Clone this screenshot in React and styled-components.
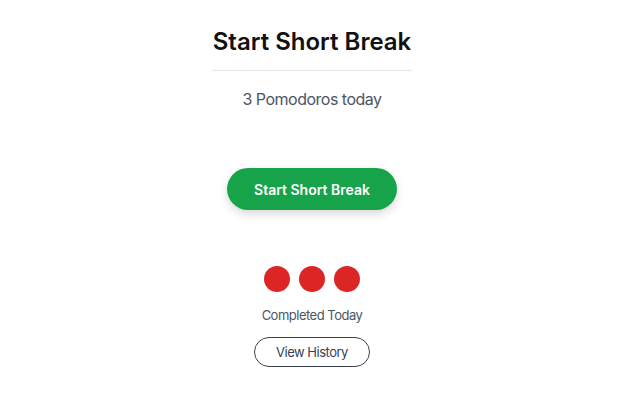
import React from "react";
import styled, { createGlobalStyle } from "styled-components";

const GlobalStyle = createGlobalStyle`
  body {
    margin: 0;
    background: #ffffff;
    font-family: Inter, "Liberation Sans", sans-serif;
  }
`;

const Page = styled.div`
  display: flex;
  flex-direction: column;
  align-items: center;
  padding: 26px 16px 0 0;
`;

const Title = styled.h1`
  margin: 0;
  font-size: 24px;
  line-height: 32px;
  font-weight: 600;
  color: #111111;
  padding-bottom: 12px;
  width: 200px;
  text-align: center;
  border-bottom: 1px solid #e5e7eb;
`;

const Count = styled.p`
  margin: 16px 0 0;
  font-size: 16px;
  line-height: 24px;
  letter-spacing: -0.5px;
  color: #4b5563;
`;

const StartButton = styled.button`
  margin-top: 57px;
  width: 170px;
  height: 42px;
  border: none;
  border-radius: 9999px;
  background: #16a34a;
  color: #ffffff;
  font-family: inherit;
  font-size: 14px;
  font-weight: 600;
  box-shadow: 0 4px 10px rgba(0, 0, 0, 0.15);
  cursor: pointer;
`;

const Dots = styled.div`
  display: flex;
  gap: 9px;
  margin-top: 56px;
`;

const Dot = styled.span`
  width: 26px;
  height: 26px;
  border-radius: 50%;
  background: #dc2626;
`;

const Label = styled.p`
  margin: 13px 0 0;
  font-size: 13px;
  line-height: 20px;
  letter-spacing: -0.5px;
  color: #4b5563;
`;

const HistoryButton = styled.button`
  margin-top: 12px;
  width: 116px;
  height: 30px;
  border: 1px solid #374151;
  border-radius: 9999px;
  background: #ffffff;
  color: #374151;
  font-family: inherit;
  font-size: 13px;
  letter-spacing: -0.5px;
  cursor: pointer;
`;

export default function App() {
  const completed = 3;
  return (
    <>
      <GlobalStyle />
      <Page>
        <Title>Start Short Break</Title>
        <Count>{completed} Pomodoros today</Count>
        <StartButton>Start Short Break</StartButton>
        <Dots>
          {Array.from({ length: completed }).map((_, i) => (
            <Dot key={i} />
          ))}
        </Dots>
        <Label>Completed Today</Label>
        <HistoryButton>View History</HistoryButton>
      </Page>
    </>
  );
}
